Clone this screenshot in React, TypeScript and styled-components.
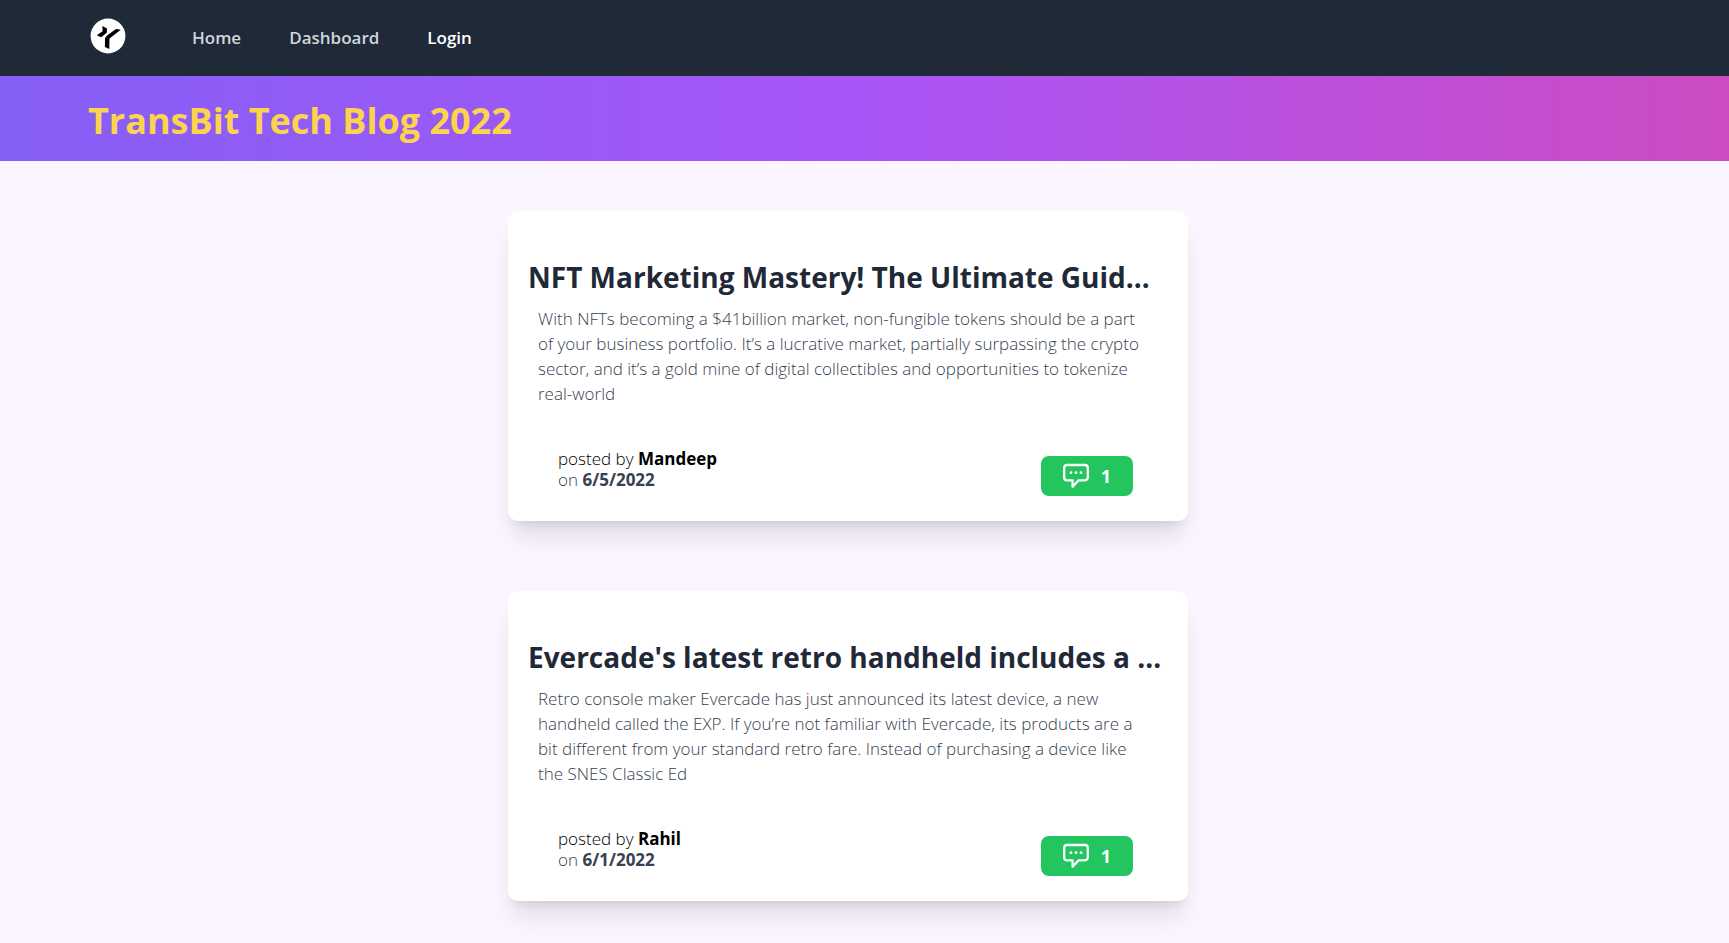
import React from "react";
import styled, { createGlobalStyle } from "styled-components";

const GlobalStyle = createGlobalStyle`
  *, *::before, *::after { box-sizing: border-box; }
  body {
    margin: 0;
    min-height: 100vh;
    background: #faf5ff;
    color: #000;
    font-family: "Segoe UI", "Open Sans", "Noto Sans", sans-serif;
  }
  h1, h2, p { margin: 0; }
`;

const Header = styled.header`
  display: flex;
  align-items: center;
  height: 76px;
  padding: 0 88px;
  background: #1f2937;
`;

const LogoLink = styled.a`
  display: flex;
  padding: 0 2px 4px;
`;

const Nav = styled.nav`
  display: flex;
  gap: 48px;
  margin-left: 64px;
`;

const NavLink = styled.a<{ $active?: boolean }>`
  color: ${({ $active }) => ($active ? "#fff" : "#d1d5db")};
  font-size: 17px;
  font-weight: 600;
  line-height: 28px;
  text-decoration: none;
`;

const Banner = styled.div`
  padding: 23px 88px 18px;
  background: linear-gradient(to right, #855ff6, #a855f7 50%, #cc4bc2);
`;

const BannerTitle = styled.h1`
  color: #fcd34d;
  font-size: 36px;
  font-weight: 700;
  line-height: 44px;
`;

const Feed = styled.main`
  display: flex;
  flex-direction: column;
  align-items: center;
  gap: 70px;
  padding: 50px 33px 42px 0;
`;

const Card = styled.article`
  width: 100%;
  max-width: 680px;
  padding: 48px 20px 25px;
  border-radius: 10px;
  background: #fff;
  box-shadow: 0 20px 25px -5px rgba(0, 0, 0, 0.1), 0 8px 10px -6px rgba(0, 0, 0, 0.1);
`;

const CardTitle = styled.h2`
  color: #1f2937;
  font-size: 28px;
  font-weight: 700;
  line-height: 36px;
  white-space: nowrap;
`;

const Excerpt = styled.p`
  padding: 11px 14px 0 10px;
  color: #374151;
  font-size: 17px;
  font-weight: 300;
  line-height: 25px;
`;

const CardFooter = styled.footer`
  display: flex;
  align-items: flex-end;
  justify-content: space-between;
  padding: 42px 35px 0 30px;
`;

const Meta = styled.div`
  padding-bottom: 6px;
  font-size: 17px;
  font-weight: 300;
  line-height: 21px;
`;

const PostDate = styled.p`
  color: #374151;
`;

const Strong = styled.strong`
  font-weight: 700;
`;

const CommentButton = styled.button`
  display: flex;
  align-items: center;
  justify-content: center;
  gap: 12px;
  width: 92px;
  height: 40px;
  padding: 0;
  border: 0;
  border-radius: 8px;
  background: #22c55e;
  color: #fff;
  font-family: inherit;
  font-size: 18px;
  font-weight: 700;
  cursor: pointer;
`;

const Logo = () => (
  <svg width="36" height="36" viewBox="0 0 36 36" aria-hidden="true">
    <circle cx="18" cy="18" r="17.4" fill="#fff" />
    <path d="M12.4 8 17 10.4 16.8 14.8 11.2 19.2 6.8 17.3 12.6 13.2Z" />
    <path d="M17 17.4 26 11 30.8 11.8 19.5 20.6 19.3 31 14.9 28.9 15 20.2Z" />
  </svg>
);

const CommentIcon = () => (
  <svg width="26" height="26" viewBox="0 0 26 26" fill="none" aria-hidden="true">
    <path
      d="M4 2h18a2.8 2.8 0 0 1 2.8 2.8v9.7a2.8 2.8 0 0 1-2.8 2.8h-6.4L9.6 23.7v-6.4H4a2.8 2.8 0 0 1-2.8-2.8V4.8A2.8 2.8 0 0 1 4 2Z"
      stroke="#fff"
      strokeWidth="2.3"
      strokeLinejoin="round"
    />
    <g fill="#fff">
      <circle cx="8" cy="9.7" r="1.4" />
      <circle cx="13" cy="9.7" r="1.4" />
      <circle cx="18" cy="9.7" r="1.4" />
    </g>
  </svg>
);

interface Post {
  title: string;
  excerpt: string;
  author: string;
  date: string;
  comments: number;
}

const posts: Post[] = [
  {
    title: "NFT Marketing Mastery! The Ultimate Guid…",
    excerpt:
      "With NFTs becoming a $41billion market, non-fungible tokens should be a part of your business portfolio. It’s a lucrative market, partially surpassing the crypto sector, and it’s a gold mine of digital collectibles and opportunities to tokenize real-world",
    author: "Mandeep",
    date: "6/5/2022",
    comments: 1,
  },
  {
    title: "Evercade's latest retro handheld includes a …",
    excerpt:
      "Retro console maker Evercade has just announced its latest device, a new handheld called the EXP. If you’re not familiar with Evercade, its products are a bit different from your standard retro fare. Instead of purchasing a device like the SNES Classic Ed",
    author: "Rahil",
    date: "6/1/2022",
    comments: 1,
  },
];

const PostCard = ({ post }: { post: Post }) => (
  <Card>
    <CardTitle>{post.title}</CardTitle>
    <Excerpt>{post.excerpt}</Excerpt>
    <CardFooter>
      <Meta>
        <p>
          posted by <Strong>{post.author}</Strong>
        </p>
        <PostDate>
          on <Strong>{post.date}</Strong>
        </PostDate>
      </Meta>
      <CommentButton type="button">
        <CommentIcon />
        {post.comments}
      </CommentButton>
    </CardFooter>
  </Card>
);

export default function App() {
  return (
    <>
      <GlobalStyle />
      <Header>
        <LogoLink href="#" aria-label="TransBit">
          <Logo />
        </LogoLink>
        <Nav>
          <NavLink href="#">Home</NavLink>
          <NavLink href="#">Dashboard</NavLink>
          <NavLink href="#" $active>
            Login
          </NavLink>
        </Nav>
      </Header>
      <Banner>
        <BannerTitle>TransBit Tech Blog 2022</BannerTitle>
      </Banner>
      <Feed>
        {posts.map((post) => (
          <PostCard key={post.title} post={post} />
        ))}
      </Feed>
    </>
  );
}
